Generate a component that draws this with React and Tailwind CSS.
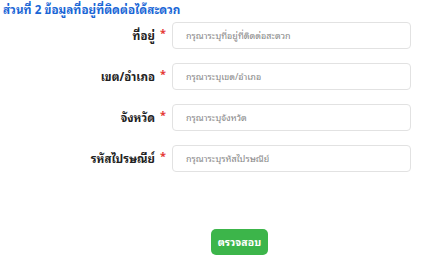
export default function App() {
  const rows = [
    ["ที่อยู่", "กรุณาระบุที่อยู่ที่ติดต่อสะดวก"],
    ["เขต/อำเภอ", "กรุณาระบุเขต/อำเภอ"],
    ["จังหวัด", "กรุณาระบุจังหวัด"],
    ["รหัสไปรษณีย์", "กรุณาระบุรหัสไปรษณีย์"],
  ];
  return (
    <div className="w-[426px] h-[277px] bg-white overflow-hidden" style={{ fontFamily: '"Noto Sans Thai Looped", "Noto Sans Thai", "Noto Sans", Tahoma, sans-serif' }}>
      <div className="pl-[3px] pt-[1px] text-[11.7px] leading-[16px] font-bold text-[#1a66d6]">
        ส่วนที่ 2 ข้อมูลที่อยู่ที่ติดต่อได้สะดวก
      </div>
      <div className="mt-[5px] flex flex-col gap-[14px]">
        {rows.map(([label, ph]) => (
          <div key={label} className="flex items-center">
            <div className="w-[172px] pr-[6px] flex justify-end items-center gap-[5px]">
              <span className="text-[11.5px] font-bold text-[#222]">{label}</span>
              <span className="text-[11px] text-[#e53935] font-bold -mt-[6px]">*</span>
            </div>
            <div className="w-[239px] h-[27px] border border-[#e2e2e2] rounded-[4px] flex items-center pl-[13px] text-[9px] text-[#888]">
              {ph}
            </div>
          </div>
        ))}
      </div>
      <div className="mt-[57px] ml-[211px] w-[57px] h-[26px] rounded-[5px] bg-[#3cb54a] flex items-center justify-center text-white text-[10.5px] font-bold">
        ตรวจสอบ
      </div>
    </div>
  );
}
